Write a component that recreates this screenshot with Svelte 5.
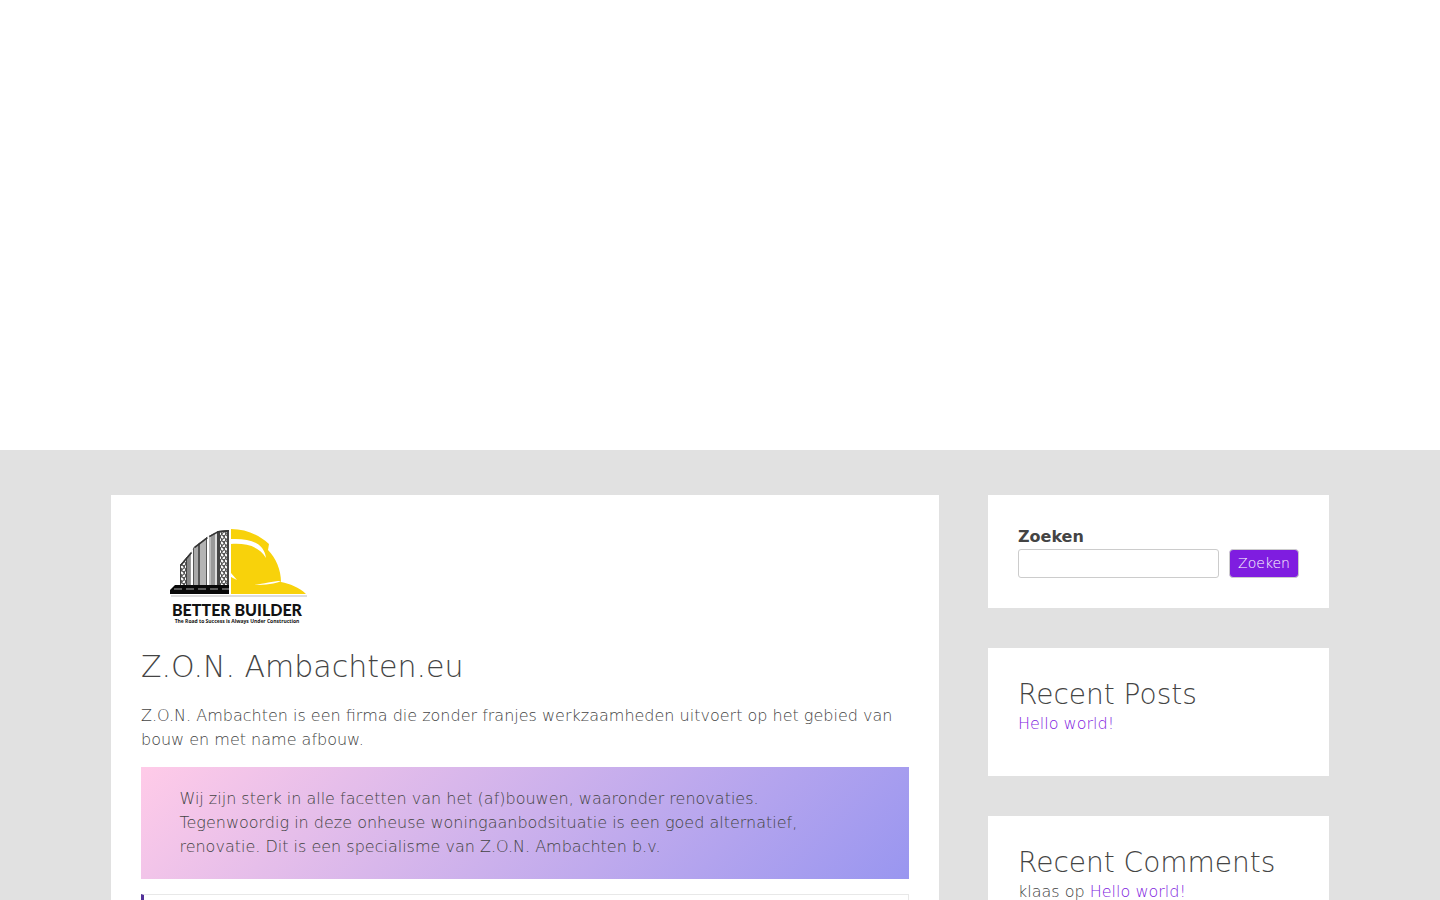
<script>
	const intro = 'Z.O.N. Ambachten is een firma die zonder franjes werkzaamheden uitvoert op het gebied van bouw en met name afbouw.';
	const highlight = [
		'Wij zijn sterk in alle facetten van het (af)bouwen, waaronder renovaties.',
		'Tegenwoordig in deze onheuse woningaanbodsituatie is een goed alternatief, renovatie. Dit is een specialisme van Z.O.N. Ambachten b.v.'
	];

	const posts = [{ title: 'Hello world!', url: '#hello-world' }];
	const comments = [{ author: 'klaas', title: 'Hello world!', url: '#comment-1' }];

	let query = $state('');

	function search(e) {
		e.preventDefault();
	}
</script>

<header class="banner"></header>

<div class="site">
	<main class="card">
		<svg class="logo" viewBox="0 0 192 120" role="img" aria-label="Better Builder">
			<defs>
				<pattern id="lattice" width="4" height="6" patternUnits="userSpaceOnUse">
					<rect width="4" height="6" fill="#555" />
					<path d="M0 1 2 3M4 4 2 6" stroke="#fff" stroke-width="2" />
				</pattern>
				<clipPath id="skyline">
					<path d="M39 57V36L50 23 53 18 66 8 77 2 88 1V57Z" />
				</clipPath>
			</defs>
			<g clip-path="url(#skyline)">
				<rect x="38" width="50" height="58" fill="#999" />
				<path d="M38 0H40V58H38ZM45 0H46V58H45Z" fill="#444" />
				<path d="M40 0H45V58H40Z" fill="url(#lattice)" />
				<path d="M46 0H49V58H46Z" fill="#888" />
				<path d="M50 0H52V58H50ZM66 0H68V58H66Z" fill="#fff" />
				<path d="M52 0H53V58H52ZM57 0H59V58H57ZM65 0H66V58H65Z" fill="#555" />
				<path d="M53 0H57V58H53Z" fill="#aaa" />
				<path d="M59 0H65V58H59Z" fill="#b4b4b4" />
				<path d="M68 0H70V58H68Z" fill="#bbb" />
				<path d="M70 0H74V58H70Z" fill="#999" />
				<path d="M74 0H76V58H74Z" fill="#ddd" />
				<path d="M76 0H88V58H76Z" fill="#444" />
				<path d="M79 3H86V58H79Z" fill="url(#lattice)" />
				<path d="M39 36 50 23M53 18 66 8M68 7 77 2 88 1" fill="none" stroke="#333" stroke-width="3" />
			</g>
			<path d="M29 65 29 61 34 56H88V65Z" fill="#080808" />
			<path d="M33 60H88" stroke="#aaa" stroke-width="1" stroke-dasharray="8 4" />
			<path d="M90 0C105 0 118 6 128 15L127 21C135 29 140 41 140 53 149 55 158 58 165 65H90Z" fill="#f8d20b" />
			<path d="M90 10C109 9 123 14 125 29 118 17 105 14 90 15ZM90 44 96 51 90 48ZM112 56C123 55 131 52 140 52 135 55 124 56 112 56Z" fill="#fff" />
			<path d="M30 67H166" stroke="#bbb" stroke-width="1" />
			<text class="logo__name" x="96" y="87" text-anchor="middle">BETTER BUILDER</text>
			<text class="logo__tagline" x="96" y="94" text-anchor="middle">The Road to Success is Always Under Construction</text>
		</svg>
		<h1>Z.O.N. Ambachten.eu</h1>
		<p>{intro}</p>
		<div class="highlight">
			{#each highlight as line}
				<p>{line}</p>
			{/each}
		</div>
		<div class="quote"></div>
	</main>

	<aside class="sidebar">
		<section class="card">
			<form class="search" onsubmit={search}>
				<label for="search">Zoeken</label>
				<div class="search__row">
					<input id="search" type="search" bind:value={query} />
					<button type="submit">Zoeken</button>
				</div>
			</form>
		</section>
		<section class="card">
			<h2>Recent Posts</h2>
			<ul>
				{#each posts as post}
					<li><a href={post.url}>{post.title}</a></li>
				{/each}
			</ul>
		</section>
		<section class="card">
			<h2>Recent Comments</h2>
			<ul>
				{#each comments as comment}
					<li>{comment.author} op <a href={comment.url}>{comment.title}</a></li>
				{/each}
			</ul>
		</section>
	</aside>
</div>

<style>
	:global(body) {
		background: #e1e1e1;
		color: #444;
		font: 200 16px/24px "DejaVu Sans", sans-serif;
		margin: 0;
	}
	.banner {
		background: #fff;
		height: 50vh;
	}
	.site {
		align-items: start;
		display: grid;
		column-gap: 4%;
		grid-template-columns: 68% 28%;
		margin: 0 auto;
		max-width: 1218px;
		padding: 45px 0;
	}
	.card {
		background: #fff;
		box-sizing: border-box;
		padding: 30px;
	}
	.logo {
		display: block;
		height: 120px;
		margin: 4px 0 0;
		width: 192px;
	}
	.logo__name {
		fill: #111;
		font: 900 16px Lato, sans-serif;
	}
	.logo__tagline {
		fill: #111;
		font: 700 5px "Open Sans", sans-serif;
	}
	h1, h2 {
		font-weight: 200;
		margin: 0;
	}
	h1 {
		font-size: 30px;
		line-height: 36px;
	}
	h2 {
		font-size: 28px;
		line-height: 34px;
	}
	p {
		margin: 19px 0 15px;
	}
	.highlight {
		background: linear-gradient(135deg, #ffcbe8, #9996f0);
		margin-bottom: 15px;
		padding: 20px 5%;
	}
	.highlight p {
		margin: 0;
	}
	.quote {
		border: 1px solid #e8e8e8;
		border-left: 3px solid #523199;
		min-height: 96px;
	}
	.sidebar {
		display: grid;
		gap: 40px;
		grid-template-columns: minmax(0, 1fr);
		min-width: 0;
	}
	.search label {
		display: block;
		font-weight: 700;
	}
	.search__row {
		display: flex;
		gap: 10px;
	}
	input {
		border: 1px solid #ccc;
		border-radius: 3px;
		box-sizing: border-box;
		flex: 1;
		font: inherit;
		height: 29px;
		min-width: 0;
		padding: 4px 8px;
	}
	button {
		background: #7f1de0;
		border: 1px solid #ccc;
		border-radius: 4px;
		color: #fff;
		font: 200 14px/17px "DejaVu Sans", sans-serif;
		height: 29px;
		padding: 4px 8px;
	}
	ul {
		list-style: none;
		margin: 0 0 10px;
		padding: 0;
	}
	a {
		color: #7f1de0;
		text-decoration: none;
	}
</style>
